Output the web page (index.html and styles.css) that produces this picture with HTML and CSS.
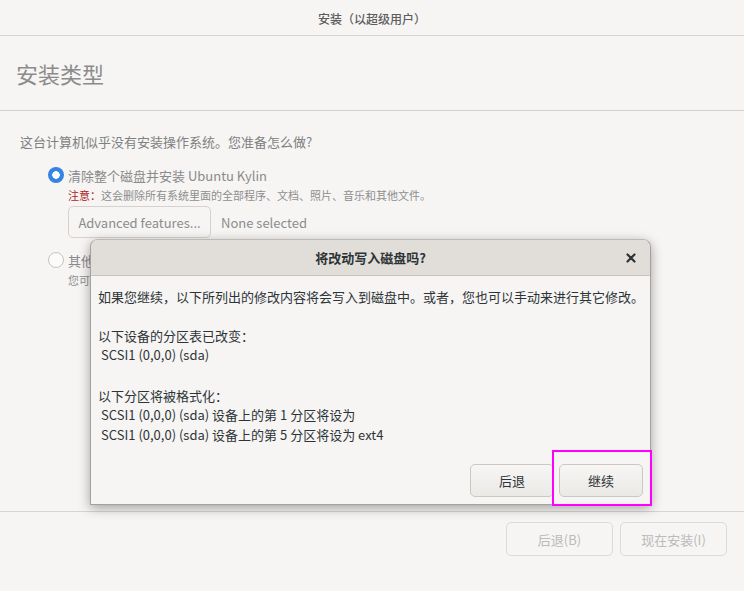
FILE: index.html
```html
<!DOCTYPE html>
<html lang="zh-CN">
<head>
<meta charset="utf-8">
<title>安装（以超级用户）</title>
<link rel="stylesheet" href="styles.css">
</head>
<body>
<div class="window">
  <div class="titlebar">安装（以超级用户）</div>
  <div class="header"><h1 class="page-title">安装类型</h1></div>
  <div class="content">
    <p class="question">这台计算机似乎没有安装操作系统。您准备怎么做?</p>
    <div class="option">
      <div class="radio-row">
        <span class="radio radio-on"></span>
        <span class="radio-label">清除整个磁盘并安装 Ubuntu Kylin</span>
      </div>
      <div class="option-body">
        <p class="note"><span class="warn">注意：</span>这会删除所有系统里面的全部程序、文档、照片、音乐和其他文件。</p>
        <div class="adv-row">
          <button class="btn adv-btn">Advanced features...</button>
          <span class="adv-state">None selected</span>
        </div>
      </div>
    </div>
    <div class="option option-2">
      <div class="radio-row">
        <span class="radio"></span>
        <span class="radio-label">其他选项</span>
      </div>
      <div class="option-body">
        <p class="note">您可以自己创建、调整分区，或者为 Ubuntu Kylin 选择多个分区。</p>
      </div>
    </div>
  </div>
  <div class="footer">
    <button class="btn btn-disabled">后退(B)</button>
    <button class="btn btn-disabled">现在安装(I)</button>
  </div>

  <div class="dialog">
    <div class="dialog-header">
      <span class="dialog-title">将改动写入磁盘吗?</span>
      <span class="dialog-close"><svg width="10" height="10" viewBox="0 0 10 10"><path d="M1.5 1.5L8.5 8.5M8.5 1.5L1.5 8.5" stroke="#2e3436" stroke-width="2.2" stroke-linecap="round"/></svg></span>
    </div>
    <div class="dialog-body">
      <p class="d-para">如果您继续，以下所列出的修改内容将会写入到磁盘中。或者，您也可以手动来进行其它修改。</p>
      <p class="d-para d-gap1">以下设备的分区表已改变：<br><span class="ind">SCSI1 (0,0,0) (sda)</span></p>
      <p class="d-para d-gap2">以下分区将被格式化：<br><span class="ind">SCSI1 (0,0,0) (sda) 设备上的第 1 分区将设为</span><br><span class="ind">SCSI1 (0,0,0) (sda) 设备上的第 5 分区将设为 ext4</span></p>
    </div>
    <div class="dialog-actions">
      <button class="btn d-btn">后退</button>
      <button class="btn d-btn">继续</button>
    </div>
  </div>
  <div class="highlight"></div>
</div>
</body>
</html>
```
FILE: styles.css
```css
* { box-sizing: border-box; }
html, body { margin: 0; padding: 0; }
body {
  background: #f6f5f4;
  font-family: "Noto Sans CJK SC", "Noto Sans", sans-serif;
  color: #2e3436;
}
.window {
  position: relative;
  width: 744px;
  height: 591px;
  display: flex;
  flex-direction: column;
  overflow: hidden;
}
.titlebar {
  height: 36px;
  border-bottom: 1px solid #d8d4d0;
  display: flex;
  align-items: center;
  justify-content: center;
  padding-top: 2px;
  font-size: 12px;
  color: #5d5d5d;
  font-weight: 500;
}
.header {
  height: 75px;
  border-bottom: 1px solid #d3cfcb;
  display: flex;
  align-items: center;
  padding: 0 16px;
}
.page-title {
  margin: 0;
  font-size: 22px;
  font-weight: normal;
  color: #8c8c8c;
  line-height: 30px;
}
.content {
  flex: 1;
  padding: 22px 20px 0;
}
.question {
  margin: 0;
  font-size: 13px;
  line-height: 18px;
  color: #808080;
}
.option { margin-left: 28px; margin-top: 15px; }
.option-2 { margin-top: 13px; }
.radio-row {
  display: flex;
  align-items: center;
  height: 18px;
}
.radio {
  width: 16px;
  height: 16px;
  border-radius: 50%;
  border: 1px solid #c8c3be;
  background: #fbfbfa;
  flex: none;
}
.radio-on {
  border: none;
  background: radial-gradient(circle, #ffffff 0 3.5px, #3584e4 4px);
}
.radio-label {
  margin-left: 4px;
  font-size: 13px;
  color: #8a8a8a;
}
.option-body { padding-left: 20px; }
.note {
  margin: 4px 0 0;
  font-size: 11px;
  line-height: 15px;
  color: #8e8e8e;
  white-space: nowrap;
}
.warn { color: #b01c1c; }
.adv-row {
  display: flex;
  align-items: center;
  gap: 10px;
  margin-top: 3px;
}
.btn {
  font-family: "Noto Sans CJK SC", "Noto Sans", sans-serif;
  font-size: 13px;
  border-radius: 5px;
  border: 1px solid #cdc7c2;
  background: #f6f5f4;
  padding: 0;
  height: 33px;
}
.adv-btn {
  width: 143px;
  height: 32px;
  color: #8c8c8c;
  border-color: #d6d1cd;
}
.adv-state { font-size: 13px; color: #8c8c8c; }
.footer {
  height: 80px;
  border-top: 1px solid #d8d4d0;
  display: flex;
  justify-content: flex-end;
  align-items: flex-start;
  gap: 7px;
  padding: 10px 17px 0 0;
}
.btn-disabled {
  width: 107px;
  height: 34px;
  color: #bdbab7;
  border-color: #dedad6;
  background: #f6f5f4;
}
.dialog {
  position: absolute;
  left: 90px;
  top: 239px;
  width: 561px;
  height: 266px;
  background: #f6f5f4;
  border: 1px solid #a3a09d;
  border-top-color: #bdb9b5;
  border-radius: 8px 8px 0 0;
  box-shadow: 0 3px 12px rgba(0, 0, 0, 0.35);
  display: flex;
  flex-direction: column;
}
.dialog-header {
  position: relative;
  height: 36px;
  flex: none;
  background: #e1deda;
  border-bottom: 1px solid #c8c3be;
  border-radius: 7px 7px 0 0;
  display: flex;
  align-items: center;
  justify-content: center;
}
.dialog-title {
  font-size: 13px;
  font-weight: bold;
  color: #2e3436;
}
.dialog-close {
  position: absolute;
  right: 14px;
  top: 13px;
  display: flex;
}
.dialog-body {
  flex: 1;
  padding: 11px 0 0 7px;
}
.d-para {
  margin: 0;
  font-size: 13px;
  line-height: 19.5px;
  color: #2e3436;
  white-space: nowrap;
}
.d-gap1 { margin-top: 19px; }
.d-gap2 { margin-top: 21px; }
.ind { padding-left: 3px; }
.dialog-actions {
  display: flex;
  justify-content: flex-end;
  gap: 5px;
  padding: 0 7px 7px 0;
}
.d-btn {
  width: 84px;
  height: 33px;
  color: #2e3436;
  background: linear-gradient(#f7f6f5, #ebe9e6);
  border-color: #cdc7c2;
}
.highlight {
  position: absolute;
  left: 552px;
  top: 450px;
  width: 100px;
  height: 56px;
  border: 2px solid #ff00ff;
}
```
